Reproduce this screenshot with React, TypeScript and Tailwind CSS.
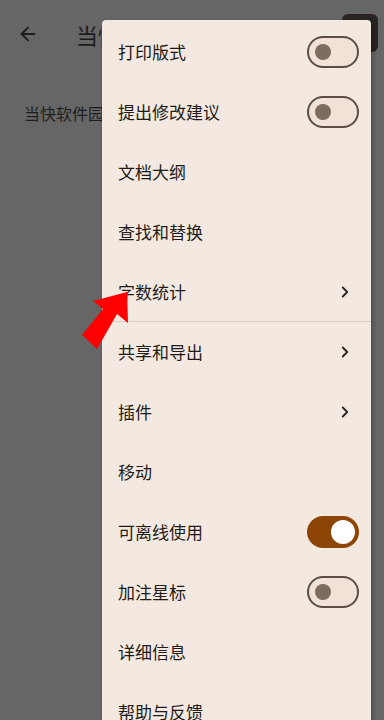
import { ArrowLeft, ChevronRight } from "lucide-react";

type Item = {
  label: string;
  kind?: "off" | "on" | "more";
  divider?: boolean;
};

const ITEMS: Item[] = [
  { label: "打印版式", kind: "off" },
  { label: "提出修改建议", kind: "off" },
  { label: "文档大纲" },
  { label: "查找和替换" },
  { label: "字数统计", kind: "more", divider: true },
  { label: "共享和导出", kind: "more" },
  { label: "插件", kind: "more" },
  { label: "移动" },
  { label: "可离线使用", kind: "on" },
  { label: "加注星标", kind: "off" },
  { label: "详细信息" },
  { label: "帮助与反馈" },
];

const font = { fontFamily: '"Noto Sans CJK SC", "Noto Sans", sans-serif' };

const Switch = ({ on }: { on: boolean }) =>
  on ? (
    <div className="w-[52px] h-[32px] rounded-full bg-[#8c4504] flex items-center justify-end pr-[4px]">
      <div className="w-[24px] h-[24px] rounded-full bg-white" />
    </div>
  ) : (
    <div className="w-[52px] h-[32px] rounded-full border-2 border-[#5c4d44] bg-[#f1e2d7] flex items-center pl-[6px]">
      <div className="w-[16px] h-[16px] rounded-full bg-[#7b6b61]" />
    </div>
  );

const MenuRow = ({ item }: { item: Item }) => (
  <div
    className={`h-[60px] flex items-center pl-[16px] pr-[12px] ${
      item.divider ? "border-b border-[#d9cdc4]" : ""
    }`}
  >
    <span className="text-[17px] text-[#1f1b18] flex-1">{item.label}</span>
    {item.kind === "off" && <Switch on={false} />}
    {item.kind === "on" && <Switch on />}
    {item.kind === "more" && (
      <ChevronRight size={18} strokeWidth={2.4} className="text-[#2a2420] mr-[5px]" />
    )}
  </div>
);

const App = () => {
  return (
    <div className="relative w-[384px] h-[720px] overflow-hidden bg-[#666666]" style={font}>
      <header className="h-[68px] flex items-center pl-[17px] pr-[6px]">
        <ArrowLeft size={22} strokeWidth={2} className="text-[#1c1c1c]" />
        <span className="ml-[37px] text-[22px] text-[#1c1c1c]">当快软件园</span>
        <div className="ml-auto w-[36px] h-[38px] -mt-[2px] rounded-md bg-[#2a2522]" />
      </header>
      <p className="pl-[24px] pt-[33px] text-[16px] text-[#1e1e1e]">当快软件园</p>

      <div className="absolute left-[102px] top-[20px] w-[269px] pt-[2px] rounded-[4px] bg-[#f3e9e1] shadow-[2px_2px_4px_rgba(0,0,0,0.25)]">
        {ITEMS.map((item) => (
          <MenuRow key={item.label} item={item} />
        ))}
      </div>

      <svg className="absolute left-0 top-0" width="384" height="720" viewBox="0 0 384 720">
        <polygon
          points="127,292 128,323 117,314 97,349 82,335 103,309 93,301"
          fill="#ff0000"
        />
      </svg>
    </div>
  );
};

export default App;
